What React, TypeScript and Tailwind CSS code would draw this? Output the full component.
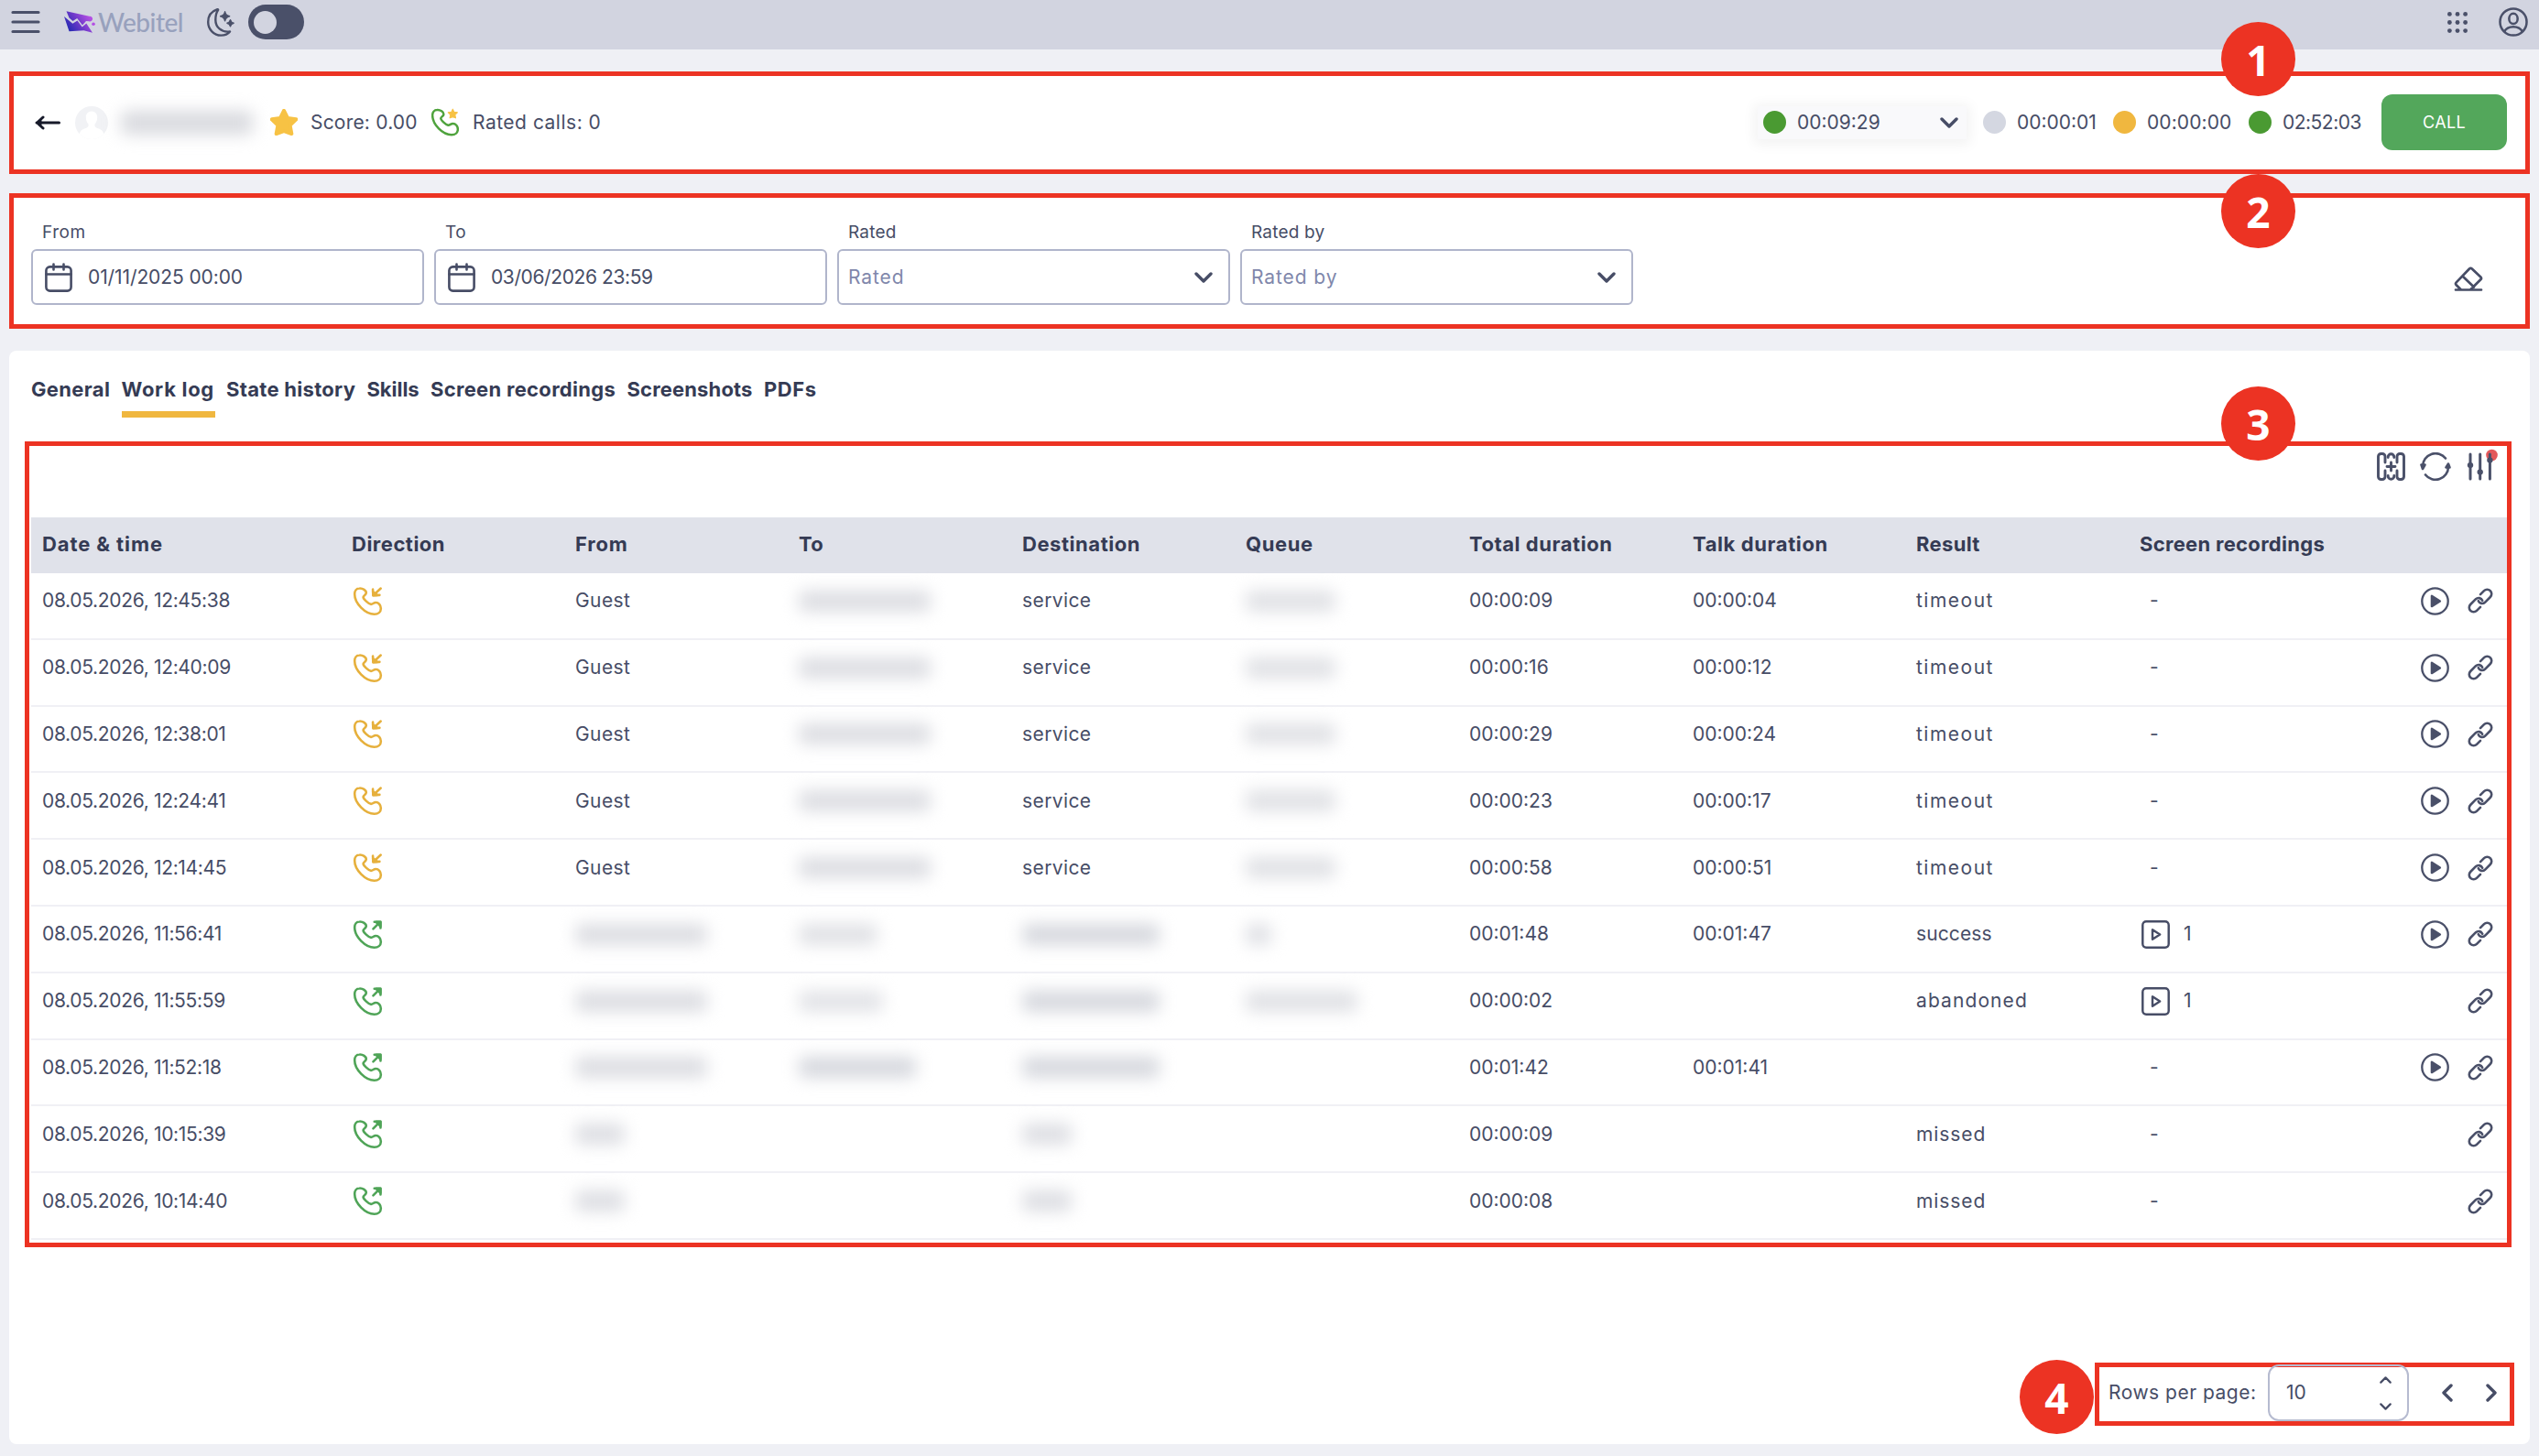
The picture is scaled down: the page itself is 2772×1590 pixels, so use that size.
import { useState } from 'react';

type Blur = { blur: string };
type Cell = string | Blur;

interface Call {
  time: string;
  direction: 'in' | 'out';
  from: Cell;
  to: Cell;
  destination: Cell;
  queue: Cell;
  total: string;
  talk: string;
  result: string;
  recordings: number;
  playable: boolean;
}

const name: Blur = { blur: 'w-[144px] bg-[#dcdde2]' };
const short: Blur = { blur: 'w-[54px] bg-[#dddee3]' };
const queue: Blur = { blur: 'w-[98px] bg-[#e0e1e5]' };
const dest: Blur = { blur: 'w-[150px] bg-[#d6d8de]' };

const incoming = (time: string, total: string, talk: string): Call => ({
  time, direction: 'in', from: 'Guest', to: name, destination: 'service', queue, total, talk, result: 'timeout', recordings: 0, playable: true,
});

const calls: Call[] = [
  incoming('08.05.2026, 12:45:38', '00:00:09', '00:00:04'),
  incoming('08.05.2026, 12:40:09', '00:00:16', '00:00:12'),
  incoming('08.05.2026, 12:38:01', '00:00:29', '00:00:24'),
  incoming('08.05.2026, 12:24:41', '00:00:23', '00:00:17'),
  incoming('08.05.2026, 12:14:45', '00:00:58', '00:00:51'),
  { time: '08.05.2026, 11:56:41', direction: 'out', from: name, to: { blur: 'w-[86px] bg-[#e0e1e5]' }, destination: dest, queue: { blur: 'w-[28px] bg-[#dfe0e5]' }, total: '00:01:48', talk: '00:01:47', result: 'success', recordings: 1, playable: true },
  { time: '08.05.2026, 11:55:59', direction: 'out', from: name, to: { blur: 'w-[92px] bg-[#e2e3e7]' }, destination: dest, queue: { blur: 'w-[122px] bg-[#e0e1e5]' }, total: '00:00:02', talk: '', result: 'abandoned', recordings: 1, playable: false },
  { time: '08.05.2026, 11:52:18', direction: 'out', from: name, to: { blur: 'w-[128px] bg-[#d6d8de]' }, destination: dest, queue: '', total: '00:01:42', talk: '00:01:41', result: '', recordings: 0, playable: true },
  { time: '08.05.2026, 10:15:39', direction: 'out', from: short, to: '', destination: short, queue: '', total: '00:00:09', talk: '', result: 'missed', recordings: 0, playable: false },
  { time: '08.05.2026, 10:14:40', direction: 'out', from: short, to: '', destination: short, queue: '', total: '00:00:08', talk: '', result: 'missed', recordings: 0, playable: false },
];

const columns = [
  { label: 'Date & time', style: 'tracking-[0.9px]' },
  { label: 'Direction', style: 'tracking-[0.5px]' },
  { label: 'From', style: 'tracking-[0.8px]' },
  { label: 'To', style: 'tracking-[0.2px]' },
  { label: 'Destination', style: 'tracking-[0.55px]' },
  { label: 'Queue', style: 'tracking-[0.6px]' },
  { label: 'Total duration', style: 'tracking-[0.55px]' },
  { label: 'Talk duration', style: 'tracking-[0.6px]' },
  { label: 'Result', style: 'tracking-[0.35px]' },
  { label: 'Screen recordings', style: 'tracking-[0.3px]' },
];

const tabs = [
  { label: 'General', style: 'w-[86px] tracking-[0.35px]' },
  { label: 'Work log', style: 'w-[102px] tracking-[0.7px]' },
  { label: 'State history', style: 'w-[141px] tracking-[0.3px]' },
  { label: 'Skills', style: 'w-[57px] tracking-[-0.05px]' },
  { label: 'Screen recordings', style: 'w-[202px] tracking-[0.3px]' },
  { label: 'Screenshots', style: 'w-[137px] tracking-[0.15px]' },
  { label: 'PDFs', style: 'w-[58px] tracking-[0.6px]' },
];

const resultStyle: Record<string, string> = {
  timeout: 'tracking-[1.5px]',
  success: 'tracking-[0.1px]',
  abandoned: 'tracking-[1.1px]',
  missed: 'tracking-[0.9px]',
};

const gridCols = 'grid grid-cols-[338px_244px_244px_244px_244px_244px_244px_244px_244px_244px_1fr]';

const PHONE = 'M5 1.2C2.5 1.2.9 3.2.9 6 .9 14 10 23 17.6 23c3.2 0 5.5-2 5.5-4.9 0-2.7-2-5-4.3-5-1.9 0-2.6 1.7-4.2 1.5C12.6 14.2 8.3 10.3 8.2 8.6c0-1.4 2.5-1.7 2.5-3.7C10.7 3 7.8 1 5 1.2Z';
const STAR = 'M12 2.2 15 8.3l6.7.9-4.9 4.7 1.3 6.8L12 18.6l-6.1 2.1 1.3-6.8L2.3 9.2 9 8.3Z';

const DirectionIcon = ({ direction }: { direction: 'in' | 'out' }) => (
  <svg viewBox="0 0 24 24" className={`w-[31px] h-[31px] overflow-visible ${direction === 'in' ? 'text-[#e6b03c]' : 'text-[#4fa457]'}`} fill="none" stroke="currentColor" strokeWidth="2" strokeLinecap="round" strokeLinejoin="round">
    <path d={PHONE} />
    {direction === 'in' ? (
      <>
        <path d="M23 1.2 17 6.8M16.3 2l.3 5.1 5.4-.2" />
        <path d="m16.4 4 .2 3.1 3.600-.2Z" fill="currentColor" />
      </>
    ) : (
      <>
        <path d="m16.600 7.300 5.600-5.600M17.600 1.400h5.200v5.200" />
        <path d="M19 1.400h3.700v3.800Z" fill="currentColor" />
      </>
    )}
  </svg>
);

const PlayIcon = () => (
  <svg viewBox="0 0 24 24" className="w-[31px] h-[31px]" fill="none" stroke="currentColor" strokeWidth="1.8">
    <circle cx="12" cy="12" r="11" />
    <path d="M9.2 7.6v8.8l7-4.4Z" fill="currentColor" strokeLinejoin="round" />
  </svg>
);

const LinkIcon = () => (
  <svg viewBox="0 0 28 28" className="w-[28px] h-[28px]" fill="none" stroke="currentColor" strokeWidth="2.6" strokeLinecap="round">
    <path d="M14 7.200 18 3.200a4.800 4.800 0 0 1 6.800 0 4.800 4.800 0 0 1 0 6.800l-5.800 5.800a4.500 4.500 0 0 1-7.200-1.600" />
    <path d="M14 20.800 10 24.800a4.800 4.800 0 0 1-6.800 0 4.800 4.800 0 0 1 0-6.800l5.800-5.800a4.500 4.500 0 0 1 7.200 1.600" />
  </svg>
);

const RecordIcon = () => (
  <svg viewBox="0 0 24 24" className="w-[31px] h-[31px]" fill="none" stroke="currentColor" strokeWidth="1.9" strokeLinejoin="round">
    <rect x="1" y="1" width="22" height="22" rx="3" />
    <path d="M9.3 8v8l6.3-4Z" />
  </svg>
);

const Chevron = ({ className = '' }: { className?: string }) => (
  <svg viewBox="0 0 20 12" className={`w-5 h-3 ${className}`} fill="none" stroke="currentColor" strokeWidth="3.4" strokeLinecap="round" strokeLinejoin="round">
    <path d="m2 2 8 8 8-8" />
  </svg>
);

const CalendarIcon = () => (
  <svg viewBox="0 0 30 32" className="w-[30px] h-8" fill="none" stroke="currentColor" strokeWidth="2.6" strokeLinecap="round">
    <rect x="1.4" y="4.4" width="27.2" height="26.2" rx="4" />
    <path d="M1.5 12.5h27M9.5 1.5v6M20.5 1.5v6" />
  </svg>
);

const Marker = ({ n, className }: { n: number; className: string }) => (
  <div className={`absolute z-10 flex h-[81px] w-[81px] items-center justify-center rounded-full bg-[#ec3323] font-['Open_Sans'] text-[46px] leading-none font-bold text-white ${className}`}>
    {n}
  </div>
);

const Timer = ({ color, value, className }: { color: string; value: string; className: string }) => (
  <div className={`flex items-center gap-3 ${className}`}>
    <span className={`h-[25px] w-[25px] shrink-0 rounded-full ${color}`}></span>
    <span>{value}</span>
  </div>
);

const TableCell = ({ value }: { value: Cell }) => (
  <div className="pl-3">
    {typeof value === 'string' ? <span className="tracking-[0.4px]">{value}</span> : <div className={`h-[23px] rounded-md blur-[9px] ${value.blur}`}></div>}
  </div>
);

const App = () => {
  const [activeTab, setActiveTab] = useState('Work log');

  return (
    <div className="relative flex h-[1590px] w-[2772px] flex-col overflow-hidden bg-[#eff0f5] font-[Inter,sans-serif] text-[21px] leading-[30px] text-[#474d66]">
      <header className="flex h-[54px] shrink-0 items-center bg-[#d2d4e0] pb-[6px] pl-[12px] pr-[12px] text-[#4a5069]">
        <svg viewBox="0 0 32 26" className="w-8 h-[26px]" stroke="currentColor" strokeWidth="3.2" strokeLinecap="round">
          <path d="M2 2.500h28M2 13h28M2 23.500h28" />
        </svg>
        <svg viewBox="0 0 34 24" className="ml-[26px] h-6 w-[34px]">
          <defs>
            <linearGradient id="logo" gradientUnits="userSpaceOnUse" x1="3" y1="22" x2="28" y2="4">
              <stop offset="0.1" stopColor="#2b2bb4" />
              <stop offset="0.5" stopColor="#6a38c8" />
              <stop offset="0.95" stopColor="#b44fe4" />
            </linearGradient>
          </defs>
          <path fill="url(#logo)" d="M2.500.3 27.500 5.800a2.900 2.900 0 1 1-.4 5.500L24 11l-4 4.500L14.200 8 9.500 11 5.500 7.500Z" />
          <path fill="url(#logo)" d="M0 6l9.300 7.700 5.200-3.100 5.200 6.900 4.600-4L31 23.700l-9.500-2.500-16 1.100Z" />
          <circle cx="32" cy="14.300" r="1.800" fill="#b44fe4" />
        </svg>
        <span className="ml-[3px] w-[93px] font-[Lato] text-[28px] leading-[30px] font-medium tracking-[-0.500px] text-[#98a1bd]">Webitel</span>
        <svg viewBox="0 0 30 31" className="ml-[26px] h-[31px] w-[30px]" fill="none" stroke="currentColor" strokeWidth="2.400" strokeLinejoin="round">
          <path d="M10.800 1.300C4.800 3.300 1.200 8.400 1.200 15c0 8 6.200 14.600 14.200 14.600 4 0 7.500-1.500 9.600-4.200-9.500 1.400-15.700-5-15.700-12.700 0-4.500 1-8.200 2.700-10.600.5-.8-.3-1.100-1.200-.8Z" />
          <path d="M19.600 3.800c.8 3.200 1.800 4.200 5 5-3.200.8-4.200 1.800-5 5-.8-3.200-1.800-4.200-5-5 3.200-.8 4.200-1.800 5-5Z" fill="currentColor" strokeWidth="1.400" />
          <path d="M25.500 12.600c.6 2.300 1.300 3 3.600 3.600-2.300.6-3 1.300-3.600 3.600-.6-2.300-1.300-3-3.600-3.600 2.300-.6 3-1.300 3.600-3.600Z" fill="currentColor" strokeWidth="1.400" />
        </svg>
        <button className="ml-[15px] h-[38px] w-[61px] rounded-full bg-[#4a5069] pl-[6px]">
          <span className="block h-[25px] w-[25px] rounded-full bg-[#d2d4e0]"></span>
        </button>
        <svg viewBox="0 0 22 23" className="ml-auto h-[23px] w-[22px]" fill="currentColor">
          {[2.4, 11, 19.6].map((x) => [2.4, 11.5, 20.6].map((y) => <circle key={`${x}-${y}`} cx={x} cy={y} r="2.4" />))}
        </svg>
        <svg viewBox="0 0 24 24" className="ml-[34px] h-8 w-8" fill="none" stroke="currentColor" strokeWidth="1.900">
          <circle cx="12" cy="12" r="10.900" />
          <ellipse cx="12" cy="9.300" rx="3.500" ry="4.200" />
          <path d="M4.600 20c1.500-3 4.200-4 7.400-4s5.900 1 7.400 4" />
        </svg>
      </header>

      <section className="mx-[10px] mt-6 flex h-[112px] shrink-0 items-center border-[5px] border-[#ec3323] bg-white pl-[23px] pr-5 pb-px">
        <svg viewBox="0 0 28 16" className="h-4 w-7 text-[#171a2a]" fill="none" stroke="currentColor" strokeWidth="3" strokeLinecap="round" strokeLinejoin="round">
          <path d="M2 8h24.500M9 2 2.500 8 9 14M6 5.500v5" />
        </svg>
        <svg viewBox="0 0 36 36" className="ml-4 h-9 w-9">
          <clipPath id="avatar"><circle cx="18" cy="18" r="18" /></clipPath>
          <g clipPath="url(#avatar)">
            <path d="M0 0h36v36H0Z" fill="#f1f2f5" />
            <path d="M18 5.500c-4 0-6.200 3-6.200 6.700 0 3.500 1.600 6 2.700 7.400.6 2.600-.7 4-3.500 4.700C6.500 25.500 4.500 28 3.500 36h29c-1-8-3-10.500-7.500-11.700-2.800-.7-4.100-2.100-3.500-4.700 1.100-1.400 2.700-3.900 2.700-7.400 0-3.700-2.200-6.700-6.200-6.700Z" fill="#fff" />
          </g>
        </svg>
        <div className="ml-[14px] h-[26px] w-[144px] rounded-md bg-[#d9dadf] blur-[9px]"></div>
        <svg viewBox="1 1 22 21" className="ml-[19px] h-[29px] w-[30px] text-[#f7c244]" fill="currentColor" stroke="currentColor" strokeWidth="3" strokeLinejoin="round">
          <path d={STAR} />
        </svg>
        <span className="ml-[14px] w-[132px] tracking-[0.2px] whitespace-nowrap">Score: 0.00</span>
        <svg viewBox="0 0 24 24" className="h-[31px] w-[30px]" fill="none" strokeWidth="2" strokeLinejoin="round">
          <path d={PHONE} stroke="#4fa33d" />
          <path d={STAR} transform="translate(13.600 -.4) scale(.42)" fill="#f7c244" stroke="#f7c244" />
        </svg>
        <span className="ml-[15px] tracking-[0.5px] whitespace-nowrap">Rated calls: 0</span>

        <div className="ml-auto flex h-9 w-[228px] items-center bg-[#f9f9fb] pl-[6px] pr-[9px] shadow-[0_2px_14px_4px_rgba(0,0,0,0.05)]">
          <Timer color="bg-[#4a9a32]" value="00:09:29" className="grow" />
          <Chevron />
        </div>
        <Timer color="bg-[#d4d7e1]" value="00:00:01" className="ml-[18px] w-[142px]" />
        <Timer color="bg-[#f0b73f]" value="00:00:00" className="w-[148px] tracking-[0.1px]" />
        <Timer color="bg-[#4a9a32]" value="02:52:03" className="w-[145px] tracking-[-0.5px]" />
        <button className="h-[61px] w-[137px] rounded-xl bg-[#53a75b] text-[18px] tracking-[0.3px] text-white">CALL</button>
      </section>

      <section className="mx-[10px] mt-[21px] flex h-[148px] shrink-0 gap-[11px] border-[5px] border-[#ec3323] bg-white pl-[19px] pr-[46px] pt-[23px]">
        {[
          { label: 'From', value: '01/11/2025 00:00', style: 'tracking-[-0.1px]' },
          { label: 'To', value: '03/06/2026 23:59', style: 'tracking-[-0.4px]' },
        ].map((field) => (
          <div key={field.label} className="w-[429px]">
            <p className="pl-3 text-[19px] tracking-[0.5px]">{field.label}</p>
            <div className="mt-[3px] flex h-[61px] items-center rounded-md border-2 border-[#b0b5cb] pl-[13px]">
              <CalendarIcon />
              <span className={`ml-[17px] ${field.style}`}>{field.value}</span>
            </div>
          </div>
        ))}
        {['Rated', 'Rated by'].map((label) => (
          <div key={label} className="w-[429px]">
            <p className="pl-3 text-[19px] tracking-[0.2px]">{label}</p>
            <div className="mt-[3px] flex h-[61px] items-center justify-between rounded-md border-2 border-[#b0b5cb] pl-[10px] pr-[17px]">
              <span className="tracking-[0.9px] text-[#8087ab]">{label}</span>
              <Chevron />
            </div>
          </div>
        ))}
        <svg viewBox="0 0 32 27" className="ml-auto mt-[52px] h-[27px] w-8" fill="none" stroke="currentColor" strokeWidth="2.700" strokeLinecap="round" strokeLinejoin="round">
          <path d="M2 25.500h28M7.500 25 2.700 20.200a2 2 0 0 1 0-2.800L17 2.500a2 2 0 0 1 2.800 0l9.500 9a2 2 0 0 1 0 2.800L18.500 25M9.500 10.500 22 22.500" />
        </svg>
      </section>

      <section className="mx-[10px] mt-6 flex h-[1194px] shrink-0 flex-col rounded-lg bg-white">
        <div className="flex gap-[12.5px] pl-6 pt-[27px]">
          {tabs.map((tab) => (
            <button
              key={tab.label}
              onClick={() => setActiveTab(tab.label)}
              className={`h-[46px] border-b-[7px] pb-[9px] text-left text-[22px] leading-[30px] font-bold whitespace-nowrap text-[#353b54] ${tab.style} ${activeTab === tab.label ? 'border-[#f0b73f]' : 'border-transparent'}`}
            >
              {tab.label}
            </button>
          ))}
        </div>

        <div className="ml-[17px] mt-[26px] h-[880px] w-[2715px] border-[5px] border-[#ec3323] pl-[2px]">
          <div className="flex h-[78px] items-start justify-end pr-[13px] pt-[7px] text-[#4a5069]">
            <svg viewBox="0 0 31 31" className="h-[31px] w-[31px]" fill="none" stroke="currentColor" strokeWidth="2.900" strokeLinecap="round">
              <path d="M9 11V4.500A3 3 0 0 0 6 1.500H4.500a3 3 0 0 0-3 3v22a3 3 0 0 0 3 3H6a3 3 0 0 0 3-3V20M22 11V4.500a3 3 0 0 1 3-3h1.500a3 3 0 0 1 3 3v22a3 3 0 0 1-3 3H25a3 3 0 0 1-3-3V20" />
              <path d="M12.200 5.500V5a3.300 3.300 0 0 1 6.600 0v.5M12.200 25.500v.5a3.300 3.300 0 0 0 6.600 0v-.5M15.500 11v9M11 15.500h9" />
            </svg>
            <svg viewBox="0 0 34 31" className="ml-4 h-[31px] w-[34px]" fill="none" stroke="currentColor" strokeWidth="2.600" strokeLinecap="round" strokeLinejoin="round">
              <path d="M28 6.500A14 14 0 0 0 3 15M6 24.500A14 14 0 0 0 31 16" />
              <path d="M1.500 13.500h4L3 18ZM28.500 16.500h4L31 12.500Z" fill="currentColor" />
            </svg>
            <svg viewBox="0 0 30 31" className="ml-[18px] h-[31px] w-[30px] overflow-visible" fill="none" stroke="currentColor" strokeWidth="3" strokeLinecap="round">
              <circle cx="26.500" cy="3" r="6.300" fill="#e3585a" stroke="none" />
              <path d="M3 2v27M13.700 2v27M24.400 2v27" />
              <path d="M2.800 14h.4M13.500 21.500h.4M24.200 8.500h.4" strokeWidth="6" />
            </svg>
          </div>

          <div className={`${gridCols} h-[61px] items-center bg-[#e0e2ea] pb-[3px] text-[22px] font-bold text-[#353b54]`}>
            {columns.map((column) => (
              <div key={column.label} className={`pl-3 whitespace-nowrap ${column.style}`}>{column.label}</div>
            ))}
          </div>

          {calls.map((call) => (
            <div key={call.time} className={`${gridCols} h-[72.8px] items-center border-b-2 border-[#f0f0f5] pb-[10px]`}>
              <div className="pl-3 tracking-[-0.33px]">{call.time}</div>
              <div className="pl-[14px]"><DirectionIcon direction={call.direction} /></div>
              <TableCell value={call.from} />
              <TableCell value={call.to} />
              <TableCell value={call.destination} />
              <TableCell value={call.queue} />
              <div className="pl-3">{call.total}</div>
              <div className="pl-3">{call.talk}</div>
              <div className={`pl-3 ${resultStyle[call.result] ?? ''}`}>{call.result}</div>
              {call.recordings ? (
                <div className="flex items-center gap-[15px] pl-[14px]">
                  <RecordIcon />
                  {call.recordings}
                </div>
              ) : (
                <div className="pl-[23px]">-</div>
              )}
              <div className="flex items-center justify-end gap-5 pr-[15px] text-[#4a5069]">
                {call.playable && <PlayIcon />}
                <LinkIcon />
              </div>
            </div>
          ))}
        </div>

        <div className="mt-auto mb-5 mr-[17px] flex h-[69px] w-[458px] items-center self-end border-[5px] border-[#ec3323] pl-[10px] pb-[3px]">
          <span className="w-[174px] tracking-[0.5px] whitespace-nowrap">Rows per page:</span>
          <div className="flex h-[62px] w-[154px] shrink-0 items-center justify-between rounded-xl border-2 border-[#b6bbd0] pl-[18px] pr-[17px]">
            <span>10</span>
            <div className="flex flex-col gap-[21px]">
              <Chevron className="w-[13px] h-[8px] rotate-180" />
              <Chevron className="w-[13px] h-[8px]" />
            </div>
          </div>
          <Chevron className="ml-[32px] shrink-0 rotate-90" />
          <Chevron className="ml-[28px] shrink-0 -rotate-90" />
        </div>
      </section>

      <Marker n={1} className="left-[2425px] top-[24px]" />
      <Marker n={2} className="left-[2425px] top-[190px]" />
      <Marker n={3} className="left-[2425px] top-[422px]" />
      <Marker n={4} className="left-[2205px] top-[1485px]" />
    </div>
  );
};

export default App;
